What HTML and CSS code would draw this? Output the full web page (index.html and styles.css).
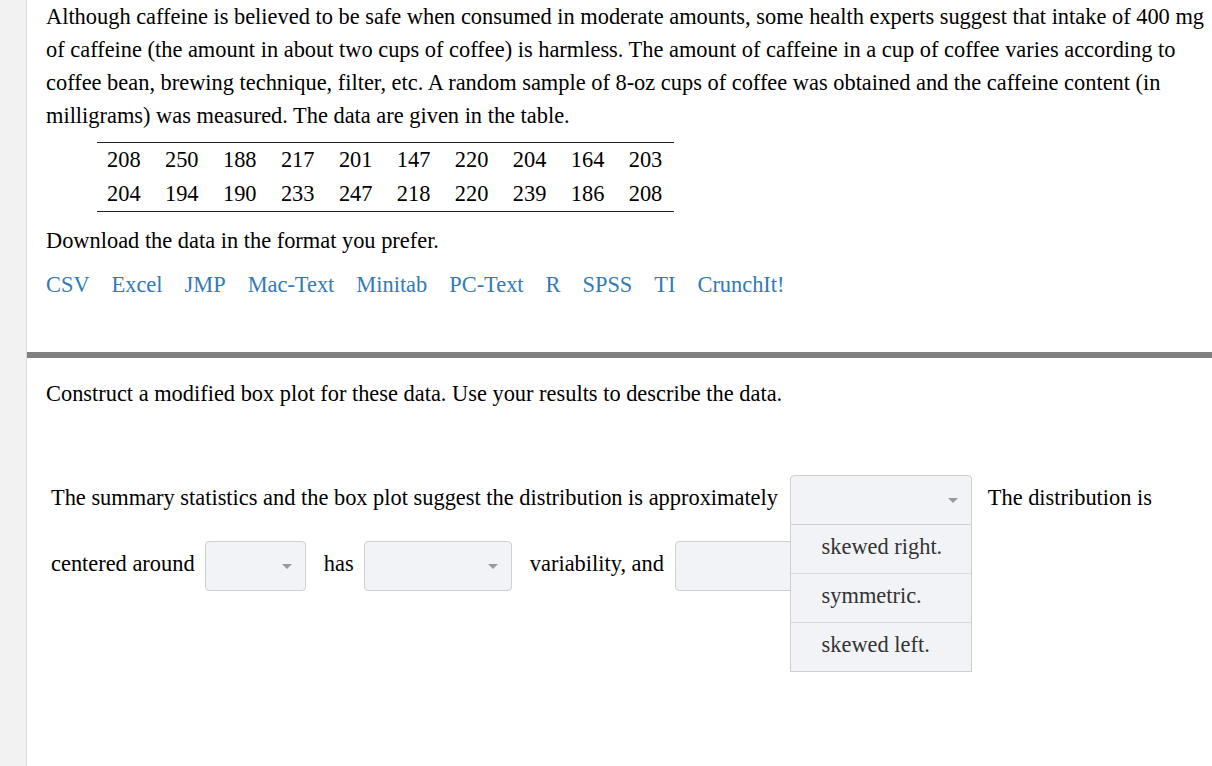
FILE: index.html
```html
<!DOCTYPE html>
<html>
<head>
<meta charset="utf-8">
<link rel="stylesheet" href="styles.css">
</head>
<body>
<div class="page">
  <aside class="sidebar"></aside>
  <main class="main">
    <section class="intro">
      <p class="para">Although caffeine is believed to be safe when consumed in moderate amounts, some health experts suggest that intake of 400 mg of caffeine (the amount in about two cups of coffee) is harmless. The amount of caffeine in a cup of coffee varies according to coffee bean, brewing technique, filter, etc. A random sample of 8-oz cups of coffee was obtained and the caffeine content (in milligrams) was measured. The data are given in the table.</p>
      <table class="data">
        <tr><td>208</td><td>250</td><td>188</td><td>217</td><td>201</td><td>147</td><td>220</td><td>204</td><td>164</td><td>203</td></tr>
        <tr><td>204</td><td>194</td><td>190</td><td>233</td><td>247</td><td>218</td><td>220</td><td>239</td><td>186</td><td>208</td></tr>
      </table>
      <p class="para download">Download the data in the format you prefer.</p>
      <div class="links">
        <a href="#">CSV</a><a href="#">Excel</a><a href="#">JMP</a><a href="#">Mac-Text</a><a href="#">Minitab</a><a href="#">PC-Text</a><a href="#">R</a><a href="#">SPSS</a><a href="#">TI</a><a href="#">CrunchIt!</a>
      </div>
    </section>
    <section class="part">
      <p class="para">Construct a modified box plot for these data. Use your results to describe the data.</p>
      <div class="sentence">The summary statistics and the box plot suggest the distribution is approximately <span class="dd-wrap"><span class="select w182 open"><span class="caret"></span></span><span class="menu"><span class="item">skewed right.</span><span class="item">symmetric.</span><span class="item">skewed left.</span></span></span> The distribution is centered around <span class="select w101"><span class="caret"></span></span> has <span class="select w148"><span class="caret"></span></span> variability, and <span class="select w160"><span class="caret"></span></span></div>
    </section>
  </main>
</div>
</body>
</html>
```
FILE: styles.css
```css
html, body {
  margin: 0;
  padding: 0;
  background: #fff;
}
body {
  font-family: "Liberation Serif", "Times New Roman", serif;
  font-size: 22.4px;
  color: #000;
}
.page {
  display: flex;
  min-height: 100vh;
}
.sidebar {
  width: 26px;
  flex: 0 0 26px;
  background: #f2f2f2;
  border-right: 1px solid #dcdcdc;
}
.main {
  flex: 1;
  min-width: 0;
}
.intro {
  padding: 0 2px 51px 19px;
}
.para {
  margin: 0;
  line-height: 33px;
}
.data {
  border-collapse: collapse;
  margin: 10px 0 0 51px;
  border-top: 1px solid #222;
  border-bottom: 1px solid #222;
}
.data td {
  padding: 5px 12.2px;
  line-height: 24px;
}
.data td:first-child { padding-left: 10px; }
.data td:last-child { padding-right: 12px; }
.download {
  margin-top: 12px;
}
.links {
  display: flex;
  gap: 22px;
  margin-top: 11px;
  line-height: 33px;
}
.links a {
  color: #337ab7;
  text-decoration: none;
}
.part {
  border-top: 6px solid #808080;
  padding: 19px 2px 0 19px;
}
.sentence {
  margin-top: 57px;
  padding-left: 5px;
  line-height: 33px;
}
.select {
  display: inline-block;
  position: relative;
  box-sizing: border-box;
  height: 50px;
  vertical-align: middle;
  margin: 8px 12px 8px 5px;
  background: #f2f3f6;
  border: 1px solid #cfcfcf;
  border-radius: 4px;
}
.w182 { width: 182px; }
.w101 { width: 101px; }
.w148 { width: 148px; }
.w160 { width: 160px; }
.caret {
  position: absolute;
  right: 13px;
  top: 22px;
  width: 0;
  height: 0;
  border-left: 5px solid transparent;
  border-right: 5px solid transparent;
  border-top: 5px solid #999;
}
.dd-wrap {
  position: relative;
  display: inline-block;
  vertical-align: middle;
  margin: 8px 11px 8px 6px;
  z-index: 2;
}
.dd-wrap .select {
  display: block;
  margin: 0;
  border-radius: 4px 4px 0 0;
}
.menu {
  position: absolute;
  left: 0;
  top: 100%;
  width: 182px;
  box-sizing: border-box;
  background: #f2f3f6;
  border: 1px solid #cfcfcf;
  border-top: none;
  display: flex;
  flex-direction: column;
}
.item {
  display: block;
  height: 48px;
  line-height: 44px;
  padding-left: 31px;
  color: #333;
  border-top: 1px solid #dcdcdc;
}
.item:first-child { border-top: none; }
```
